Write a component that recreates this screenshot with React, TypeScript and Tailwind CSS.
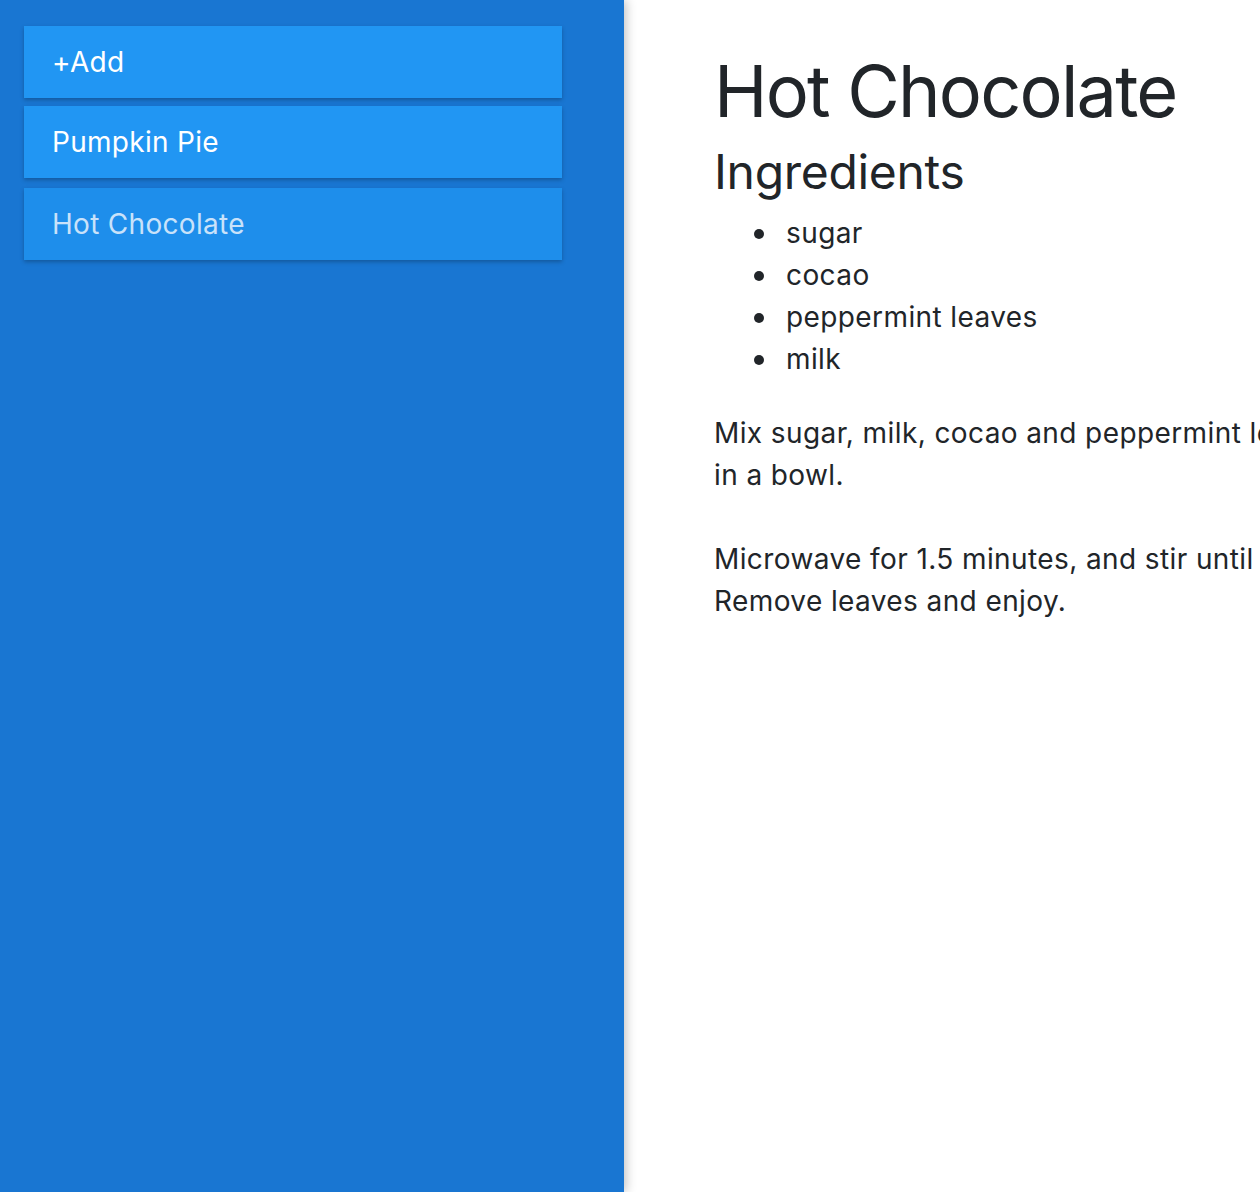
import React, { useState } from 'react';

interface Recipe {
  name: string;
  ingredients: string[];
  directions: string[][];
}

const recipes: Recipe[] = [
  {
    name: 'Pumpkin Pie',
    ingredients: ['pumpkin puree', 'sweetened condensed milk', 'eggs', 'pumpkin pie spice', 'pie crust'],
    directions: [['Mix pumpkin puree, milk, eggs and spice', 'in a bowl.'], ['Pour into crust and bake for 40 minutes.']],
  },
  {
    name: 'Hot Chocolate',
    ingredients: ['sugar', 'cocao', 'peppermint leaves', 'milk'],
    directions: [
      ['Mix sugar, milk, cocao and peppermint leaves', 'in a bowl.'],
      ['Microwave for 1.5 minutes, and stir until warm.', 'Remove leaves and enjoy.'],
    ],
  },
];

const font = { fontFamily: 'Inter, "Noto Sans", sans-serif' };

const App: React.FC = () => {
  const [selected, setSelected] = useState(1);
  const recipe = recipes[selected];

  return (
    <div className="flex w-[1260px] h-[1192px] overflow-hidden bg-white" style={font}>
      {/* Sidebar */}
      <div className="relative z-10 w-[624px] shrink-0 h-full bg-[#1976d2] px-6 pt-[26px] shadow-[2px_0_10px_rgba(0,0,0,0.25)]">
        <button className="flex items-center w-[538px] h-[72px] pl-[28px] mb-2 bg-[#2196f3] text-white text-[28px] tracking-[0.3px] shadow-[0_2px_4px_rgba(0,0,0,0.25)]">
          +Add
        </button>
        {recipes.map((r, i) => (
          <button
            key={r.name}
            onClick={() => setSelected(i)}
            className={
              i === selected
                ? 'flex items-center w-[538px] h-[72px] pl-[28px] mb-[10px] bg-[#1e8eeb] text-[#c9e2fa] text-[28px] tracking-[0.3px] shadow-[0_2px_4px_rgba(0,0,0,0.25)]'
                : 'flex items-center w-[538px] h-[72px] pl-[28px] mb-[10px] bg-[#2196f3] text-white text-[28px] tracking-[0.3px] shadow-[0_2px_4px_rgba(0,0,0,0.25)]'
            }
          >
            {r.name}
          </button>
        ))}
      </div>

      {/* Recipe */}
      <div className="flex-1 overflow-hidden pl-[90px] pt-[48px] text-[#212529]">
        <div className="w-[680px]">
          <h1 className="text-[72px] leading-[1.2] font-normal tracking-[-1.8px] mb-[9px]">{recipe.name}</h1>
          <h2 className="text-[48px] leading-[1.2] font-normal tracking-[-0.3px] mb-[11px]">Ingredients</h2>
          <ul className="pl-[40px] mb-8 text-[28px] leading-[42px] tracking-[0.4px]">
            {recipe.ingredients.map((ing) => (
              <li key={ing} className="flex items-center">
                <span className="w-[10px] h-[10px] rounded-full bg-[#212529] mr-[22px] mt-[2px] shrink-0" />
                {ing}
              </li>
            ))}
          </ul>
          {recipe.directions.map((lines, i) => (
            <p key={i} className="text-[28px] leading-[42px] tracking-[0.4px] mb-[42px] whitespace-nowrap">
              {lines.map((l, j) => (
                <React.Fragment key={j}>
                  {j > 0 && <br />}
                  {l}
                </React.Fragment>
              ))}
            </p>
          ))}
        </div>
      </div>
    </div>
  );
};

export default App;
